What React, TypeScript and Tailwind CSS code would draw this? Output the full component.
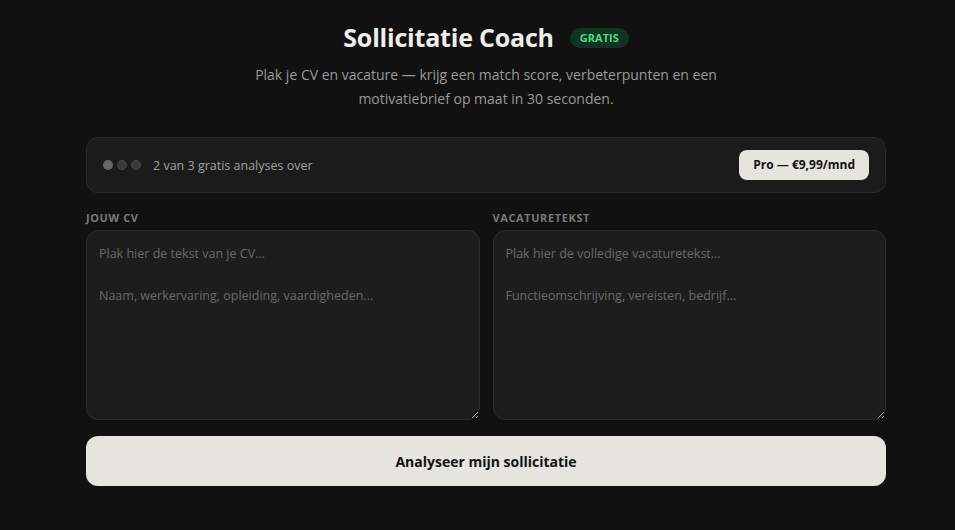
import { useState } from "react";

const FONT = { fontFamily: '"Segoe UI", "Open Sans", "Noto Sans", sans-serif' };

export default function App() {
  const [cv, setCv] = useState("");
  const [job, setJob] = useState("");
  const used = 1;

  return (
    <div className="min-h-screen bg-[#111111] text-[#e8e6e1]" style={FONT}>
      <div className="ml-[86px] w-[800px] pt-[19px]">
        <header className="flex flex-col items-center">
          <div className="flex items-center gap-4">
            <h1 className="text-[25px] font-bold tracking-[-0.2px] text-[#f0eee9]">Sollicitatie Coach</h1>
            <span className="rounded-full bg-[#123222] px-[10px] py-[2px] text-[11px] font-bold text-[#4ade80]">
              GRATIS
            </span>
          </div>
          <p className="mt-[6px] w-[500px] text-center text-[14px] leading-[24px] text-[#9a9a9a]">
            Plak je CV en vacature — krijg een match score, verbeterpunten en een motivatiebrief op maat in 30 seconden.
          </p>
        </header>

        <div className="mt-[26px] flex h-[56px] items-center justify-between rounded-xl border border-[#2a2a2a] bg-[#1b1b1b] pl-4 pr-4">
          <div className="flex items-center gap-3">
            <div className="flex items-center gap-[4px]">
              {[0, 1, 2].map((i) => (
                <span
                  key={i}
                  className={
                    i < used
                      ? "h-[10px] w-[10px] rounded-full bg-[#666666]"
                      : "h-[10px] w-[10px] rounded-full bg-[#3a3a3a] border border-[#4a4a4a]"
                  }
                />
              ))}
            </div>
            <span className="pt-[4px] text-[12.5px] text-[#a0a0a0]">2 van 3 gratis analyses over</span>
          </div>
          <button className="h-[30px] rounded-lg bg-[#e6e4df] px-[14px] text-[12px] font-bold text-[#111111]">
            Pro — €9,99/mnd
          </button>
        </div>

        <div className="mt-[17px] grid grid-cols-2 gap-[13px]">
          <label className="flex flex-col">
            <span className="mb-[4px] text-[11px] font-bold tracking-[0.6px] text-[#7a7a7a]">JOUW CV</span>
            <textarea
              value={cv}
              onChange={(e) => setCv(e.target.value)}
              placeholder={"Plak hier de tekst van je CV...\n\nNaam, werkervaring, opleiding, vaardigheden..."}
              className="h-[190px] rounded-xl border border-[#2e2e2e] bg-[#1d1d1d] px-3 py-[12px] text-[12.5px] leading-[21px] text-[#e8e6e1] outline-none placeholder:text-[#6a6a6a]"
            />
          </label>
          <label className="flex flex-col">
            <span className="mb-[4px] text-[11px] font-bold tracking-[0.6px] text-[#7a7a7a]">VACATURETEKST</span>
            <textarea
              value={job}
              onChange={(e) => setJob(e.target.value)}
              placeholder={"Plak hier de volledige vacaturetekst...\n\nFunctieomschrijving, vereisten, bedrijf..."}
              className="h-[190px] rounded-xl border border-[#2e2e2e] bg-[#1d1d1d] px-3 py-[12px] text-[12.5px] leading-[21px] text-[#e8e6e1] outline-none placeholder:text-[#6a6a6a]"
            />
          </label>
        </div>

        <button className="mt-[16px] h-[50px] w-full rounded-xl bg-[#e6e4df] text-[14px] font-bold text-[#111111]">
          Analyseer mijn sollicitatie
        </button>
      </div>
    </div>
  );
}
